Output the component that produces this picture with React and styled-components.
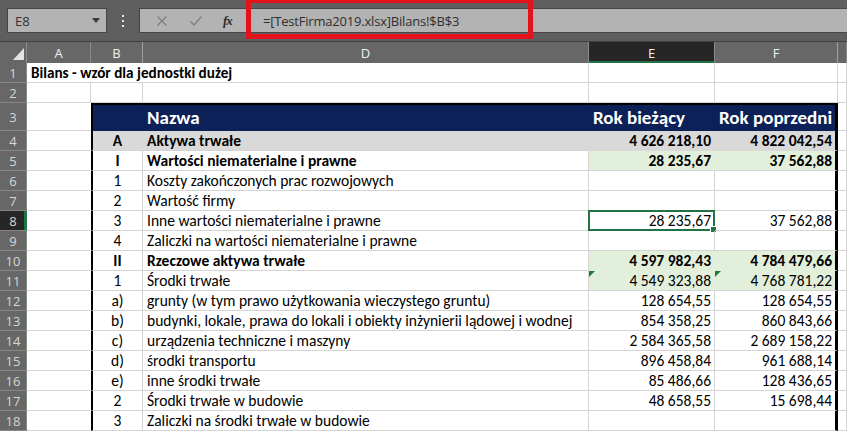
import React from 'react';
import styled, { createGlobalStyle, css } from 'styled-components';

const CELL_FONT = `Carlito, Calibri, "Liberation Sans", Arial, sans-serif`;
const UI_FONT = `"Open Sans", "Noto Sans", sans-serif`;
const GRID = '#d4d4d4';
const NAVY = '#0c2158';
const GREEN_FILL = '#e2efda';
const GRAY_FILL = '#d9d9d9';
const XL_GREEN = '#217346';

const GlobalStyle = createGlobalStyle`
  html, body {
    margin: 0;
    padding: 0;
    background: #ffffff;
    overflow: hidden;
  }
`;

const Frame = styled.div`
  width: 847px;
  height: 433px;
  overflow: hidden;
  background: #ffffff;
  position: relative;
`;

/* ---------- formula bar ---------- */

const FormulaBar = styled.div`
  height: 42px;
  box-sizing: border-box;
  background: #5f5f5f;
  border-bottom: 1px solid #404040;
  display: flex;
  align-items: flex-start;
  padding-top: 8px;
  position: relative;
`;

const Box = styled.div`
  height: 25px;
  box-sizing: border-box;
  background: #b3b3b3;
  border: 1px solid #464646;
  display: flex;
  align-items: center;
  font-family: ${UI_FONT};
  font-size: 13px;
  color: #333;
`;

const NameBox = styled(Box)`
  margin-left: 7px;
  width: 100px;
  padding: 0 6px 0 7px;
  justify-content: space-between;
`;

const DropArrow = styled.span`
  width: 0;
  height: 0;
  border-left: 4px solid transparent;
  border-right: 4px solid transparent;
  border-top: 5px solid #3a3a3a;
`;

const Grip = styled.div`
  width: 32px;
  height: 25px;
  display: flex;
  flex-direction: column;
  align-items: center;
  justify-content: center;
  gap: 3px;
  span {
    width: 2px;
    height: 2px;
    background: #e6e6e6;
  }
`;

const ButtonsBox = styled(Box)`
  width: 109px;
  border-right: none;
  justify-content: space-around;
  padding: 0 6px 0 6px;
`;

const FxText = styled.span`
  font-family: "Liberation Serif", serif;
  font-style: italic;
  font-weight: bold;
  font-size: 13px;
  color: #2b2b2b;
  letter-spacing: -1px;
`;

const FormulaInput = styled(Box)`
  flex: 1;
  padding-left: 14px;
  font-size: 13px;
  letter-spacing: -0.2px;
  color: #2f2f2f;
  border-right: none;
`;

const Highlight = styled.div`
  position: absolute;
  left: 246px;
  top: -2px;
  width: 287px;
  height: 41px;
  box-sizing: border-box;
  border: 5px solid #e3121b;
`;

/* ---------- sheet grid ---------- */

const COLS = '27px 64px 52px 446px 126px 123px 9px';

const Row = styled.div`
  display: grid;
  grid-template-columns: ${COLS};
  height: ${(p) => p.$h}px;
`;

const HeadCell = styled.div`
  box-sizing: border-box;
  background: ${(p) => (p.$active ? '#262626' : '#676767')};
  color: #f0f0f0;
  font-family: ${UI_FONT};
  font-size: 13px;
  display: flex;
  align-items: center;
  justify-content: center;
  border-right: 1px solid #8a8a8a;
  position: relative;
  ${(p) =>
    p.$active &&
    css`
      box-shadow: inset 0 -2px 0 ${XL_GREEN};
    `}
  ${(p) =>
    p.$hiddenAfter &&
    css`
      border-right: 1px solid #a0a0a0;
      &::after {
        content: '';
        position: absolute;
        right: -4px;
        top: 2px;
        bottom: 0;
        width: 1px;
        background: #a0a0a0;
      }
    `}
`;

const Corner = styled(HeadCell)`
  justify-content: flex-end;
  align-items: flex-end;
  padding: 0 2px 3px 0;
`;

const SelectAll = styled.span`
  width: 0;
  height: 0;
  border-left: 11px solid transparent;
  border-bottom: 12px solid #e4e4e4;
`;

const RowNum = styled.div`
  box-sizing: border-box;
  background: ${(p) => (p.$active ? '#262626' : '#676767')};
  color: #d6d6d6;
  font-family: ${UI_FONT};
  font-size: 13px;
  display: flex;
  align-items: center;
  justify-content: center;
  border-bottom: 1px solid #878787;
  border-right: 1px solid ${(p) => (p.$active ? XL_GREEN : '#7e8f82')};
  ${(p) =>
    p.$active &&
    css`
      box-shadow: inset -2px 0 0 ${XL_GREEN};
    `}
`;

const Cell = styled.div`
  box-sizing: border-box;
  position: relative;
  display: flex;
  align-items: center;
  justify-content: ${(p) =>
    p.$align === 'right' ? 'flex-end' : p.$align === 'center' ? 'center' : 'flex-start'};
  padding: ${(p) => (p.$align === 'right' ? '0 3px 0 0' : p.$align === 'center' ? '0' : '0 0 0 4px')};
  font-family: ${CELL_FONT};
  font-size: ${(p) => p.$size || 15.5}px;
  font-weight: ${(p) => (p.$bold ? 700 : 400)};
  color: ${(p) => p.$color || '#000'};
  white-space: nowrap;
  background: ${(p) => p.$fill || 'transparent'};
  border-right: 1px solid ${(p) => p.$rightColor || GRID};
  border-bottom: 1px solid ${(p) => p.$bottomColor || GRID};
  ${(p) => p.$span && css`grid-column: ${p.$span};`}
  ${(p) => p.$tableLeft && css`border-left: 2px solid #000;`}
  ${(p) => p.$tableRight && css`border-right: 3px solid #000;`}
  ${(p) => p.$tableTop && css`border-top: 2px solid #000;`}
`;

const Selection = styled.span`
  position: absolute;
  left: -1px;
  top: -1px;
  right: -1px;
  bottom: -1px;
  border: 2px solid ${XL_GREEN};
  pointer-events: none;
  &::after {
    content: '';
    position: absolute;
    right: -4px;
    bottom: -4px;
    width: 5px;
    height: 5px;
    background: ${XL_GREEN};
    border: 1px solid #fff;
  }
`;

const ErrorMark = styled.span`
  position: absolute;
  left: 0;
  top: 0;
  width: 0;
  height: 0;
  border-top: 6px solid #1d7a34;
  border-right: 6px solid transparent;
`;

const rows = [
  { n: 4, b: 'A', d: 'Aktywa trwałe', e: '4 626 218,10', f: '4 822 042,54', bold: true, gray: true },
  { n: 5, b: 'I', d: 'Wartości niematerialne i prawne', e: '28 235,67', f: '37 562,88', bold: true, green: true },
  { n: 6, b: '1', d: 'Koszty zakończonych prac rozwojowych' },
  { n: 7, b: '2', d: 'Wartość firmy' },
  { n: 8, b: '3', d: 'Inne wartości niematerialne i prawne', e: '28 235,67', f: '37 562,88', selected: true },
  { n: 9, b: '4', d: 'Zaliczki na wartości niematerialne i prawne' },
  { n: 10, b: 'II', d: 'Rzeczowe aktywa trwałe', e: '4 597 982,43', f: '4 784 479,66', bold: true, green: true, joinBelow: true },
  { n: 11, b: '1', d: 'Środki trwałe', e: '4 549 323,88', f: '4 768 781,22', green: true, marks: true },
  { n: 12, b: 'a)', d: 'grunty (w tym prawo użytkowania wieczystego gruntu)', e: '128 654,55', f: '128 654,55' },
  { n: 13, b: 'b)', d: 'budynki, lokale, prawa do lokali i obiekty inżynierii lądowej i wodnej', e: '854 358,25', f: '860 843,66' },
  { n: 14, b: 'c)', d: 'urządzenia techniczne i maszyny', e: '2 584 365,58', f: '2 689 158,22' },
  { n: 15, b: 'd)', d: 'środki transportu', e: '896 458,84', f: '961 688,14' },
  { n: 16, b: 'e)', d: 'inne środki trwałe', e: '85 486,66', f: '128 436,65' },
  { n: 17, b: '2', d: 'Środki trwałe w budowie', e: '48 658,55', f: '15 698,44' },
  { n: 18, b: '3', d: 'Zaliczki na środki trwałe w budowie' },
];

const DataRow = ({ row }) => {
  const fill = row.gray ? GRAY_FILL : undefined;
  const valFill = row.gray ? GRAY_FILL : row.green ? GREEN_FILL : undefined;
  const lineB = row.gray ? GRAY_FILL : undefined;
  const valBottom = row.gray ? GRAY_FILL : row.joinBelow ? GREEN_FILL : undefined;
  return (
    <Row $h={20}>
      <RowNum $active={row.selected}>{row.n}</RowNum>
      <Cell $rightColor="transparent" />
      <Cell $tableLeft $align="center" $bold={row.bold} $fill={fill} $rightColor={lineB}>
        {row.b}
      </Cell>
      <Cell $bold={row.bold} $fill={fill} $rightColor={lineB}>
        {row.d}
      </Cell>
      <Cell
        $align="right"
        $bold={row.bold}
        $fill={valFill}
        $rightColor={row.gray || row.green ? valFill : undefined}
        $bottomColor={valBottom}
      >
        {row.marks && <ErrorMark />}
        {row.e}
        {row.selected && <Selection />}
      </Cell>
      <Cell $tableRight $align="right" $bold={row.bold} $fill={valFill} $bottomColor={valBottom}>
        {row.marks && <ErrorMark />}
        {row.f}
      </Cell>
      <Cell />
    </Row>
  );
};

const App = () => (
  <Frame>
    <GlobalStyle />
    <FormulaBar>
      <NameBox>
        <span>E8</span>
        <DropArrow />
      </NameBox>
      <Grip>
        <span />
        <span />
        <span />
      </Grip>
      <ButtonsBox>
        <svg width="12" height="12" viewBox="0 0 12 12">
          <path d="M1.5 1.5 L10.5 10.5 M10.5 1.5 L1.5 10.5" stroke="#808080" strokeWidth="1.3" />
        </svg>
        <svg width="14" height="12" viewBox="0 0 14 12">
          <path d="M1.5 6.5 L5 10 L12.5 1.5" stroke="#808080" strokeWidth="1.4" fill="none" />
        </svg>
        <FxText>fx</FxText>
      </ButtonsBox>
      <FormulaInput>=[TestFirma2019.xlsx]Bilans!$B$3</FormulaInput>
      <Highlight />
    </FormulaBar>

    <Row $h={21}>
      <Corner>
        <SelectAll />
      </Corner>
      <HeadCell>A</HeadCell>
      <HeadCell $hiddenAfter>B</HeadCell>
      <HeadCell>D</HeadCell>
      <HeadCell $active>E</HeadCell>
      <HeadCell $hiddenAfter>F</HeadCell>
      <HeadCell />
    </Row>

    <Row $h={20}>
      <RowNum>1</RowNum>
      <Cell $span="2 / 5" $bold $size={15.2}>
        Bilans - wzór dla jednostki dużej
      </Cell>
      <Cell />
      <Cell />
      <Cell />
    </Row>

    <Row $h={20}>
      <RowNum>2</RowNum>
      <Cell />
      <Cell />
      <Cell />
      <Cell />
      <Cell />
      <Cell />
    </Row>

    <Row $h={28}>
      <RowNum>3</RowNum>
      <Cell $rightColor="transparent" />
      <Cell $tableLeft $tableTop $fill={NAVY} $rightColor={NAVY} $bottomColor={NAVY} />
      <Cell $tableTop $fill={NAVY} $rightColor={NAVY} $bottomColor={NAVY} $bold $size={19} $color="#fff">
        Nazwa
      </Cell>
      <Cell $tableTop $fill={NAVY} $rightColor={NAVY} $bottomColor={NAVY} $bold $size={19} $color="#fff">
        Rok bieżący
      </Cell>
      <Cell $tableTop $tableRight $fill={NAVY} $bottomColor={NAVY} $bold $size={19} $color="#fff">
        Rok poprzedni
      </Cell>
      <Cell />
    </Row>

    {rows.map((row) => (
      <DataRow key={row.n} row={row} />
    ))}
  </Frame>
);

export default App;
